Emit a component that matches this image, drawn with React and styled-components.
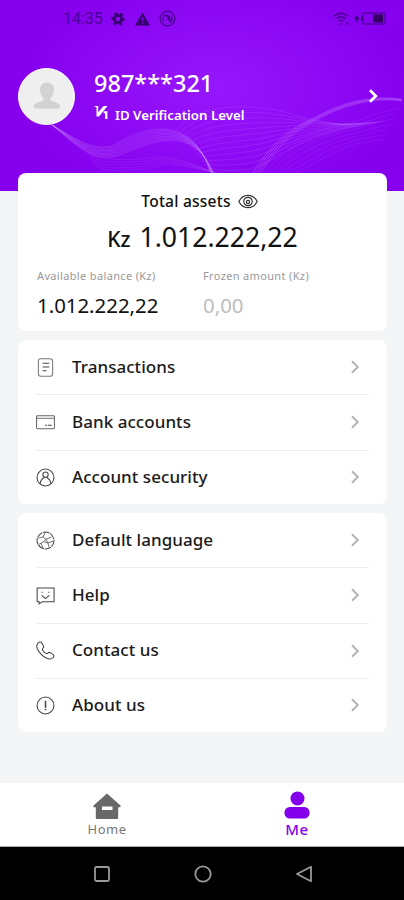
import React, { useState } from "react";
import styled, { createGlobalStyle } from "styled-components";

const GlobalStyle = createGlobalStyle`
    * {
        box-sizing : border-box;
    }
    body {
        margin : 0;
        background : #f3f5f7;
        font-family : "Noto Sans", "Open Sans", sans-serif;
    }
    button {
        border : none;
        background : none;
        padding : 0;
        font : inherit;
    }
`

// each wave is a family of thin lines running from one outline to the other
const waves = [
    { from: [52, 125, 76, 138, 88, 150, 112, 146, 150, 122, 194, 118, 210, 172], to: [52, 125, 80, 148, 92, 162, 118, 156, 156, 140, 192, 124, 214, 174], count: 9, opacity: 0.2 },
    { from: [88, 152, 100, 162, 130, 160, 150, 158, 166, 154, 190, 162, 212, 172], to: [92, 162, 104, 176, 136, 170, 158, 166, 172, 162, 196, 168, 220, 174], count: 5, opacity: 0.1 },
    { from: [176, 130, 200, 104, 236, 106, 264, 108, 290, 112, 308, 121, 345, 125], to: [208, 168, 226, 172, 250, 172, 268, 162, 290, 148, 312, 134, 384, 121], count: 12, opacity: 0.13 },
    { from: [252, 174, 276, 136, 296, 126, 314, 118, 342, 102, 372, 95, 402, 99], to: [260, 174, 278, 144, 298, 129, 318, 119, 346, 104, 376, 97, 402, 101], count: 4, opacity: 0.26 },
    { from: [264, 166, 290, 136, 316, 131, 346, 124, 362, 120, 378, 112, 400, 108], to: [296, 172, 318, 164, 332, 150, 356, 144, 370, 141, 378, 140, 384, 140], count: 7, opacity: 0.09 },
];

const wavePath = ({ from, to, count }, i) => {
    const t = i / (count - 1);
    const p = from.map((value, k) => (value + (to[k] - value) * t).toFixed(1));
    return `M${p[0]} ${p[1]} C${p.slice(2, 8).join(" ")} C${p.slice(8, 10).join(" ")} ${p.slice(10, 12).join(" ")} ${p[12]} ${p[13]}`;
}

const Waves = () => (
    <WaveCSS viewBox="0 0 404 191">
        {waves.map((wave, w) => (
            <g key={w} stroke="#d9a8ff" strokeOpacity={wave.opacity} strokeWidth="1" fill="none">
                {Array.from({ length: wave.count }, (_, i) => <path key={i} d={wavePath(wave, i)} />)}
            </g>
        ))}
    </WaveCSS>
)

const Chevron = ({ color = "#b5b5b5", width = 2, size = 16 }) => (
    <svg width={size} height={size} viewBox="0 0 16 16" fill="none" stroke={color} strokeWidth={width}>
        <path d="M5 2.2 L10.8 8 L5 13.8" />
    </svg>
)

const icons = {
    transactions: (
        <>
            <rect x="2.5" y="0.8" width="15" height="18.4" rx="2.5" stroke="#777" />
            <path d="M7 5.5h7M7 9.5h7M7 13.5h4" />
        </>
    ),
    bank: (
        <>
            <rect x="0.6" y="3" width="18.8" height="13.6" rx="1" stroke="#666" />
            <path d="M1 5.6h18" stroke="#777" />
            <path d="M9.5 13h2M12.5 13h4" />
        </>
    ),
    security: (
        <>
            <circle cx="10" cy="10" r="8.9" />
            <circle cx="10" cy="7" r="2.8" />
            <path d="M4.3 16.4c.5-3.4 2.4-5.400 4.700-6.400M15.700 16.400c-.5-3.400-2.400-5.400-4.700-6.400" />
        </>
    ),
    language: (
        <>
            <circle cx="10" cy="10" r="8.9" strokeDasharray="7 .8" />
            <path d="M2.3 7.5l5.2-1.2 2-4.4M7.5 6.3l3 2.4 5.8-2.500M10.500 8.700L8 11.200l-5 3M8 11.200l4.500 1.300 1.300 4.500M12.500 12.500l5.400-1.600M10.500 8.700l2 3.800M5 12.800l2.400 5" strokeWidth="0.8" />
        </>
    ),
    help: (
        <>
            <path d="M1.200 2h17.800v14.600H6.500L3.300 18.800v-2.200H1.200z" />
            <path d="M6 9.800l4 3.400 4-3.400" />
            <path d="M6 6.500h1.200M12.800 6.500h1.200" />
        </>
    ),
    contact: (
        <path d="M2.600 1.800c1.300-1.100 2.800-.9 3.500.3l1.700 3c.6 1 .3 1.800-.6 2.600-.7.700-.7 1.200-.2 2 .9 1.400 2 2.500 3.400 3.300.8.500 1.300.4 2-.3.800-.8 1.600-1 2.600-.4l2.800 1.800c1.200.8 1.300 2.200.3 3.300-1.700 2-4.400 2-7.300.5-4.200-2.200-7.300-5.300-9.300-9.500C.4 5.800.7 3.400 2.600 1.800z" />
    ),
    about: (
        <>
            <circle cx="10" cy="10" r="8.9" />
            <path d="M10 5v7.500" strokeWidth="1.600" />
            <path d="M10 13.500v1.500" strokeWidth="1.600" />
        </>
    ),
};

const MenuItem = ({ icon, label }) => (
    <MenuItemCSS>
        <svg width="19" height="19" viewBox="0 0 20 20" fill="none" stroke="#444" strokeWidth="1.1">
            {icons[icon]}
        </svg>
        <span>{label}</span>
        <Chevron />
    </MenuItemCSS>
)

const StatusBar = () => (
    <StatusBarCSS>
        <span className="time">14:35</span>
        <svg width="14" height="14" viewBox="0 0 14 14">
            <circle cx="7" cy="7" r="3.7" fill="none" stroke="#36006f" strokeWidth="2.8" />
            <circle cx="7" cy="7" r="5.9" fill="none" stroke="#36006f" strokeWidth="2" strokeDasharray="3 3.178" strokeDashoffset="1.5" />
        </svg>
        <svg className="warning" width="15" height="14" viewBox="0 0 15 14">
            <path d="M7.5 .5L15 13.5H0z" fill="#36006f" />
            <path d="M7.5 5v4M7.5 10.3v1.5" stroke="#8200e8" strokeWidth="1.3" />
        </svg>
        <svg className="record" width="17" height="17" viewBox="0 0 17 17" fill="none" stroke="#46008c">
            <circle cx="8.5" cy="8.5" r="7.3" strokeWidth="1.3" />
            <path d="M5 11.500a4.700 4.700 0 0 1 1.500-7M12 5.500a4.700 4.700 0 0 1-1.500 7" strokeWidth="1.200" />
            <path d="M6.500 5.800c2.500-.6 4.500 1 4.500 4.500L8.300 8.200" strokeWidth="1.900" />
        </svg>
        <div className="right">
            <svg width="17" height="14" viewBox="0 0 17 14" fill="none" stroke="#4b0092" strokeWidth="1.5">
                <path d="M1 4.2c4-3.900 10-3.900 14 0M3.400 6.800c2.800-2.600 6.400-2.600 9.200 0M5.700 9.300c1.500-1.300 3.100-1.300 4.600 0" />
                <path d="M8 11v2M14 10v3" />
            </svg>
            <svg width="32" height="13" viewBox="0 0 32 13">
                <path d="M4 2.500L0 7h2.500L1.500 11l4-5H3.500z" fill="#36006f" />
                <rect x="9" y="1" width="22" height="11" rx="2" fill="none" stroke="#5500a5" strokeWidth="1.4" />
                <rect x="7" y="4.5" width="2" height="4" fill="#36006f" />
                <rect x="19" y="2.5" width="10" height="8" fill="#330064" />
            </svg>
        </div>
    </StatusBarCSS>
)

const Profile = () => (
    <ProfileCSS>
        <div className="avatar">
            <svg width="30" height="30" viewBox="0 0 30 30" fill="#d2d2d2">
                <path d="M15 1.5c4.2 0 7 3 7 7.300 0 3.500-1.400 6.600-3.500 8.200v2.200c1.500 1.500 9.700 2 9.700 6.300 0 1.300-.7 2-2 2H3.800c-1.300 0-2-.7-2-2 0-4.300 8.200-4.800 9.700-6.300V17C9.400 15.400 8 12.300 8 8.800c0-4.300 2.800-7.300 7-7.300z" />
            </svg>
        </div>
        <div className="user-infos">
            <div className="user-name">987***321</div>
            <div className="user-level">
                <svg width="15" height="15" viewBox="0 0 15 15" fill="#fff">
                    <path d="M0 1h4.200v6.300L9.500 1h4L5 11.500H2.500V2.500z" />
                    <path d="M9.700 6.300h3.700v7.700h-2.300V8.200H9.700z" />
                </svg>
                <span>ID Verification Level</span>
            </div>
        </div>
        <Chevron color="#fff" width={2.7} />
    </ProfileCSS>
)

const App = () => {
    const [tab, setTab] = useState("me");

    return (
        <AppCSS>
            <GlobalStyle />
            <HeaderCSS>
                <Waves />
                <StatusBar />
                <Profile />
            </HeaderCSS>

            <ContentCSS>
                <AssetsCSS>
                    <div className="assets-title">
                        <span>Total assets</span>
                        <svg width="20" height="15" viewBox="0 0 20 15" fill="none" stroke="#333" strokeWidth="1.2">
                            <path d="M.8 7.5C5 -.7 15 -.7 19.2 7.5 15 15.7 5 15.7 .8 7.5z" />
                            <circle cx="10" cy="7.5" r="4.2" />
                            <circle cx="10" cy="8" r="1.6" />
                        </svg>
                    </div>
                    <div className="assets-total"><span>Kz</span>1.012.222,22</div>
                    <div className="assets-detail">
                        <BalanceCSS>
                            <span>Available balance (Kz)</span>
                            <strong>1.012.222,22</strong>
                        </BalanceCSS>
                        <BalanceCSS $muted>
                            <span>Frozen amount (Kz)</span>
                            <strong>0,00</strong>
                        </BalanceCSS>
                    </div>
                </AssetsCSS>

                <MenuCSS>
                    <MenuItem icon="transactions" label="Transactions" />
                    <MenuItem icon="bank" label="Bank accounts" />
                    <MenuItem icon="security" label="Account security" />
                </MenuCSS>

                <MenuCSS>
                    <MenuItem icon="language" label="Default language" />
                    <MenuItem icon="help" label="Help" />
                    <MenuItem icon="contact" label="Contact us" />
                    <MenuItem icon="about" label="About us" />
                </MenuCSS>
            </ContentCSS>

            <TabBarCSS>
                <TabCSS $active={tab === "home"} onClick={() => setTab("home")}>
                    <svg width="28" height="27" viewBox="0 0 28 27" fill="#686868">
                        <path d="M14 0.500L27.500 12.500v1.800h-2.300V24.500c0 1-.5 1.500-1.500 1.500H4.300c-1 0-1.500-.5-1.500-1.500V14.300H.5v-1.800z" />
                        <rect x="9" y="13.500" width="10.500" height="3.500" fill="#fff" />
                    </svg>
                    <span>Home</span>
                </TabCSS>
                <TabCSS $active={tab === "me"} onClick={() => setTab("me")}>
                    <svg width="26" height="29" viewBox="0 0 26 29" fill="#8400ec">
                        <circle cx="13.5" cy="7.5" r="7" />
                        <rect x="0.5" y="16" width="25" height="11.5" rx="5.2" />
                    </svg>
                    <span>Me</span>
                </TabCSS>
            </TabBarCSS>

            <SystemNavCSS>
                <svg width="18" height="18" viewBox="0 0 18 18"><rect x="2" y="2" width="14" height="14" rx="1.5" /></svg>
                <svg width="18" height="18" viewBox="0 0 18 18"><circle cx="9" cy="9" r="7.7" /></svg>
                <svg width="18" height="18" viewBox="0 0 18 18"><path d="M16 1.8v14.4L2 9z" strokeLinejoin="round" /></svg>
            </SystemNavCSS>
        </AppCSS>
    )
}

const AppCSS = styled.div`
    display : flex;
    flex-direction : column;
    width : 404px;
    height : 900px;
    overflow : hidden;
    background : #f3f5f7;
`

const HeaderCSS = styled.header`
    position : relative;
    flex : none;
    height : 191px;
    background : radial-gradient(ellipse 190px 115px at 215px 88px, #9617fb 0%, #900df6 45%, #8600ee 100%);
`

const WaveCSS = styled.svg`
    position : absolute;
    inset : 0;
    width : 404px;
    height : 191px;
`

const StatusBarCSS = styled.div`
    position : relative;
    display : flex;
    align-items : center;
    height : 37px;
    padding : 0 18px 0 63px;

    .time {
        width : 48px;
        font-family : Roboto, sans-serif;
        font-size : 16px;
        color : #4a0092;
    }
    .warning {
        margin-left : 10px;
    }
    .record {
        margin-left : 9px;
    }
    .right {
        display : flex;
        align-items : center;
        gap : 4px;
        margin-left : auto;
    }
`

const ProfileCSS = styled.div`
    position : relative;
    display : flex;
    align-items : center;
    height : 58px;
    margin-top : 30px;
    padding : 0 23px 0 18px;
    color : #fff;

    .avatar {
        display : flex;
        align-items : center;
        justify-content : center;
        width : 57px;
        height : 57px;
        border : 1px solid #fff;
        border-radius : 50%;
        background : #efefef;
    }
    .user-infos {
        flex : 1;
        margin-left : 19px;
        padding-top : 4px;
    }
    .user-name {
        font-size : 23.5px;
        font-weight : 500;
        line-height : 34px;
    }
    .user-level {
        display : flex;
        align-items : center;
        font-size : 13.3px;
        font-weight : 600;
        line-height : 30px;
        span {
            margin-left : 6px;
        }
        svg {
            margin-top : -6px;
        }
    }
`

const ContentCSS = styled.main`
    position : relative;
    flex : 1;
    display : flex;
    flex-direction : column;
    gap : 9px;
    margin-top : -18px;
    padding : 0 17px 0 18px;
`

const AssetsCSS = styled.section`
    height : 158px;
    padding-top : 16px;
    border-radius : 8px;
    background : #fff;
    color : #111;

    .assets-title {
        display : flex;
        align-items : center;
        justify-content : center;
        gap : 7px;
        padding-right : 6px;
        font-size : 15.6px;
        font-weight : 500;
        line-height : 25px;
        letter-spacing : 0.2px;
    }
    .assets-total {
        display : flex;
        align-items : baseline;
        justify-content : center;
        font-size : 26.6px;
        line-height : 46px;
        span {
            margin-right : 9px;
            font-size : 21px;
            font-weight : 500;
        }
    }
    .assets-detail {
        display : grid;
        grid-template-columns : 166px 1fr;
        margin-top : 4px;
        padding-left : 19px;
    }
`

const BalanceCSS = styled.div`
    display : flex;
    flex-direction : column;

    span {
        font-size : 11px;
        line-height : 20px;
        letter-spacing : 0.35px;
        color : #999;
    }
    strong {
        margin-top : 3px;
        font-size : 20.4px;
        font-weight : 400;
        line-height : 32px;
        color : ${({ $muted }) => ($muted ? "#bdbdbd" : "#111")};
    }
`

const MenuItemCSS = styled.div`
    display : flex;
    align-items : center;
    height : 55.2px;
    padding-right : 6px;
    color : #1a1a1a;

    & + & {
        border-top : 1px solid #eeeeef;
    }
    span {
        flex : 1;
        margin-left : 17px;
        margin-top : -2px;
        font-size : 17px;
        font-weight : 500;
        letter-spacing : 0.05px;
    }
`

const MenuCSS = styled.section`
    padding : 0 18px;
    border-radius : 8px;
    background : #fff;

    ${MenuItemCSS}:first-child,
    ${MenuItemCSS}:last-child {
        height : 54.4px;
    }
`

const TabBarCSS = styled.nav`
    flex : none;
    display : flex;
    height : 64px;
    padding : 0 12px;
    border-bottom : 1px solid #aaa;
    background : #fff;
`

const TabCSS = styled.button`
    flex : 1;
    display : flex;
    flex-direction : column;
    align-items : center;
    justify-content : flex-end;
    padding-bottom : 8px;
    font-size : ${({ $active }) => ($active ? "15px" : "13px")};
    font-weight : ${({ $active }) => ($active ? 500 : 400)};
    line-height : 18px;
    letter-spacing : 0.5px;
    color : ${({ $active }) => ($active ? "#8400ec" : "#777")};
`

const SystemNavCSS = styled.footer`
    flex : none;
    display : flex;
    align-items : center;
    justify-content : space-between;
    height : 53px;
    padding : 0 91px 0 93px;
    background : #000;

    svg {
        fill : none;
        stroke : #999;
        stroke-width : 1.8;
    }
`

export default App;
